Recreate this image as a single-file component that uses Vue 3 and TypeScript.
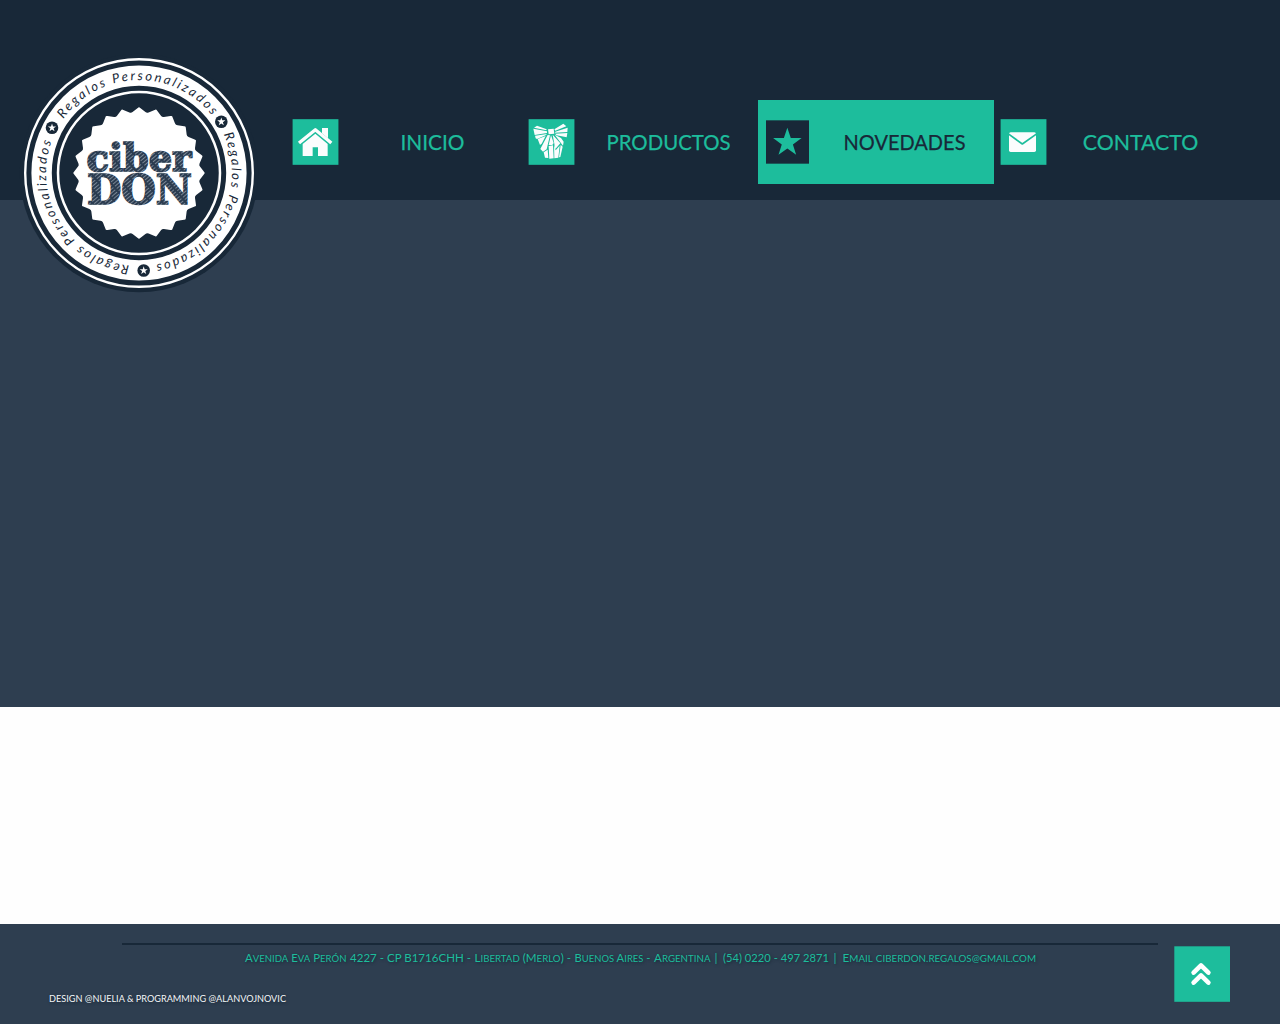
<script setup lang="ts">
type IconName = 'home' | 'gift' | 'star' | 'mail'

interface NavItem {
  label: string
  icon: IconName
  width: number
  active?: boolean
}

interface Segment {
  text: string
  x: number
  width?: number
}

const nav: NavItem[] = [
  { label: 'INICIO', icon: 'home', width: 64 },
  { label: 'PRODUCTOS', icon: 'gift', width: 124 },
  { label: 'NOVEDADES', icon: 'star', width: 122, active: true },
  { label: 'CONTACTO', icon: 'mail', width: 115.5 },
]

const address: Segment[] = [
  { text: 'Avenida Eva Perón', x: 123, width: 101.5 },
  { text: '4227 - CP B1716CHH -', x: 228, width: 121 },
  { text: 'Libertad (Merlo) -', x: 352.5, width: 96.5 },
  { text: 'Buenos Aires -', x: 452.5, width: 76 },
  { text: 'Argentina', x: 532, width: 56.5 },
  { text: '|', x: 592.4 },
  { text: '(54) 0220 - 497 2871', x: 601, width: 106 },
  { text: '|', x: 711.6 },
  { text: 'Email ciberdon.regalos@gmail.com', x: 720.5, width: 193.5 },
]

// Splits a string into full-size runs and small capitals
const runs = (text: string) =>
  (text.match(/[\p{Ll}.@]+|[^\p{Ll}.@]+/gu) ?? []).map((t) => ({
    text: t.toUpperCase(),
    small: /\p{Ll}/u.test(t),
  }))

const point = (radius: number, degrees: number, cx = 0, cy = 0): string => {
  const a = (degrees * Math.PI) / 180
  return `${(cx + radius * Math.cos(a)).toFixed(2)} ${(cy + radius * Math.sin(a)).toFixed(2)}`
}

const R = 93
const arcs = [
  { id: 'arc-a', from: 215.5, to: 321.5 },
  { id: 'arc-b', from: -24.5, to: 79.5 },
  { id: 'arc-c', from: 96, to: 199.5 },
].map((a) => ({
  id: a.id,
  d: `M${point(R, a.from)} A${R} ${R} 0 0 1 ${point(R, a.to + 4)}`,
  length: (R * (a.to - a.from) * Math.PI) / 180,
}))

// Rounded teeth around the badge
const TEETH = 24
const STEP = 360 / TEETH
const seal = Array.from({ length: TEETH }, (_, i) => {
  const a = i * STEP - 90
  const start = i === 0 ? `M${point(65, a - 1.1)}` : `L${point(65, a - 1.1)}`
  return `${start} Q${point(66.6, a)} ${point(65, a + 1.1)} L${point(61.3, a + 6)} Q${point(60.3, a + 7.5)} ${point(61.3, a + 9)}`
}).join(' ') + 'Z'

const starPoints = (radius: number, cx = 0, cy = 0): string =>
  Array.from({ length: 10 }, (_, i) =>
    point(i % 2 ? radius * 0.39 : radius, i * 36 - 90, cx, cy).replace(' ', ','),
  ).join(' ')

const marks = [
  { x: -87, y: -45.2, rotate: 0 },
  { x: 82.3, y: -51.3, rotate: 0 },
  { x: 4.7, y: 97.5, rotate: 0 },
]
</script>

<template>
  <div class="page">
    <header class="header">
      <a class="logo" href="#">
        <svg viewBox="-120 -120 240 240" width="240" height="240">
          <defs>
            <pattern id="sketch" width="9" height="2.9" patternUnits="userSpaceOnUse" patternTransform="rotate(-40)">
              <rect width="9" height="2.9" fill="#2b3c50" />
              <rect width="7" height="0.8" fill="#8b97a4" />
            </pattern>
            <path v-for="arc in arcs" :id="arc.id" :key="arc.id" :d="arc.d" />
          </defs>
          <circle r="119.3" fill="#182838" />
          <circle r="113.8" fill="none" stroke="#fff" stroke-width="2.4" />
          <circle r="97.4" fill="none" stroke="#fff" stroke-width="20.4" />
          <circle r="81" fill="none" stroke="#fff" stroke-width="2.5" />
          <path :d="seal" fill="#fff" />
          <text v-for="arc in arcs" :key="arc.id" class="ring-text">
            <textPath :href="'#' + arc.id" :textLength="arc.length" lengthAdjust="spacing">Regalos Personalizados</textPath>
          </text>
          <g v-for="(m, i) in marks" :key="i" :transform="`translate(${m.x} ${m.y}) rotate(${m.rotate})`">
            <circle r="6.3" fill="#182838" />
            <polygon :points="starPoints(4.3)" fill="#fff" />
          </g>
          <text class="brand" x="-52.5" y="-1.8" font-size="38" textLength="105" lengthAdjust="spacingAndGlyphs">ciber</text>
          <text class="brand" x="-52" y="31.3" font-size="41" textLength="105" lengthAdjust="spacingAndGlyphs">DON</text>
        </svg>
      </a>
      <nav class="nav">
        <a v-for="item in nav" :key="item.label" href="#" class="item" :class="{ active: item.active }">
          <svg class="icon" viewBox="0 0 138 138" width="46" height="46">
            <rect v-if="item.icon !== 'star'" x="-1.2" y="0.5" width="137.5" height="137" fill="#1dbd9c" />
            <g v-if="item.icon === 'home'" fill="#fbfcfd" transform="translate(-2 0)">
              <path d="M20 72 L69 32 L117 72" fill="none" stroke="#fbfcfd" stroke-width="10" stroke-linejoin="round" />
              <path d="M89 27h18v31L89 43z" />
              <path d="M69 44 L106 75V111H77V85H61V111H31V75Z" />
            </g>
            <g v-else-if="item.icon === 'gift'" fill="#fbfcfd" transform="translate(-3 0)">
              <path d="M18 26 L27 20 L56 31 L55 34Z M16 29 L57 37 V42 L20 48Z M21 50 L57 45 L53 49 L27 60 L23 58Z" />
              <path d="M79 31 L106 14 L115 22 L82 35Z M82 38 L119 26 L118 39 L81 41Z M81 44 L118 42 L116 55 L86 49Z" />
              <path d="M60 31 L77 29 L79 44 L62 46Z" />
              <path d="M59 48 L37 90 L45 98 L56 91 L66 49Z M69 48 L62 78 L73 78 L77 72Z M74 47 L82 90 L97 73Z M80 47 L105 80 L107 68 L99 57Z M53 51 L29 60 L36 78 L41 74Z" />
              <path d="M47 100 L59 92 L61 117 L51 116Z M62 81 L75 79 L77 118 L64 119Z M78 76 L83 94 L95 80 L91 116 L79 118Z M98 77 L104 83 L97 114 L93 115Z" />
            </g>
            <g v-else-if="item.icon === 'star'">
              <rect y="4" width="129" height="130" fill="#182838" />
              <polygon :points="starPoints(45, 64, 71)" fill="#1dbd9c" />
            </g>
            <g v-else transform="translate(-1 0)">
              <rect x="25" y="40" width="81" height="59" rx="5" fill="#fbfcfd" />
              <path d="M22 44 L65 75 L109 44" fill="none" stroke="#1dbd9c" stroke-width="5" stroke-linejoin="round" />
            </g>
          </svg>
          <svg class="label" viewBox="0 0 173 46" width="173" height="46">
            <text x="86.5" y="31" text-anchor="middle" :textLength="item.width" lengthAdjust="spacingAndGlyphs">{{ item.label }}</text>
          </svg>
        </a>
      </nav>
    </header>

    <main class="hero"></main>
    <section class="blank"></section>

    <footer class="footer">
      <div class="credits">
        <svg class="address" width="1036" height="27" viewBox="0 0 1036 27">
          <text v-for="(s, i) in address" :key="i" :x="s.x" y="17.2" :textLength="s.width" lengthAdjust="spacingAndGlyphs"><tspan v-for="(r, j) in runs(s.text)" :key="j" :class="{ small: r.small }">{{ r.text }}</tspan></text>
        </svg>
        <svg class="design" width="260" height="20" viewBox="0 0 260 20">
          <text x="0" y="13" textLength="237" lengthAdjust="spacingAndGlyphs">DESIGN @NUELIA &amp; PROGRAMMING @ALANVOJNOVIC</text>
        </svg>
      </div>
      <a class="top" href="#">
        <svg width="56" height="56" viewBox="0 0 56 56">
          <rect x="0.3" y="0.3" width="55.7" height="55.5" fill="#1dbd9c" />
          <path d="M19.6 26.6 L27 19.4 L34.4 26.6 M19.6 36.6 L27 29.4 L34.4 36.6" fill="none" stroke="#fff" stroke-width="4.6" stroke-linecap="round" stroke-linejoin="round" />
        </svg>
      </a>
    </footer>
  </div>
</template>

<style>
body {
  margin: 0;
  background: #fff;
}
</style>

<style scoped>
.page {
  display: flex;
  flex-direction: column;
  width: 1280px;
  height: 1024px;
  overflow: hidden;
  font-family: Lato, "Open Sans", sans-serif;
}

svg {
  display: block;
  overflow: visible;
}

.header {
  position: relative;
  box-sizing: border-box;
  flex: none;
  height: 200px;
  padding: 100px 50px 0 286px;
  background: #182838;
}

.logo {
  position: absolute;
  left: 19px;
  top: 53.3px;
}

.ring-text {
  fill: #182838;
  font: italic 400 13px Lato, sans-serif;
}

.brand {
  fill: url(#sketch);
  stroke: url(#sketch);
  stroke-width: 1.7px;
  font-family: "DejaVu Serif", serif;
  font-weight: 700;
}

.nav {
  display: flex;
}

.item {
  display: flex;
  box-sizing: border-box;
  width: 236px;
  height: 84px;
  padding: 19px 0 0 7px;
  color: #1dbd9c;
  text-decoration: none;
}

.item.active {
  padding-left: 8px;
  color: #182838;
  background: #1dbd9c;
}

.icon {
  flex: none;
}

.label {
  flex: none;
  margin-left: 7px;
}

.active .label {
  margin-left: 6px;
}

.label text {
  fill: currentColor;
  stroke: currentColor;
  stroke-width: 0.25px;
  font-size: 22px;
}

.hero {
  flex: none;
  height: 506.6px;
  background: #2e3e50;
}

.blank {
  flex: 1;
  background: #fefefe;
}

.footer {
  display: flex;
  box-sizing: border-box;
  flex: none;
  height: 100px;
  padding: 19px 50px 0 49px;
  justify-content: space-between;
  background: #2e3e50;
}

.address {
  margin-left: 73px;
  border-top: 2px solid #182838;
  fill: #1dbd9c;
  font-size: 12px;
  text-shadow: 1px 1px 3px #182838;
}

.address .small {
  font-size: 10px;
}

.design {
  margin-top: 17px;
  fill: #f4f6f7;
  font-size: 10px;
  text-shadow: 1px 1px 3px #182838;
}

.top {
  margin-top: 3px;
}
</style>
